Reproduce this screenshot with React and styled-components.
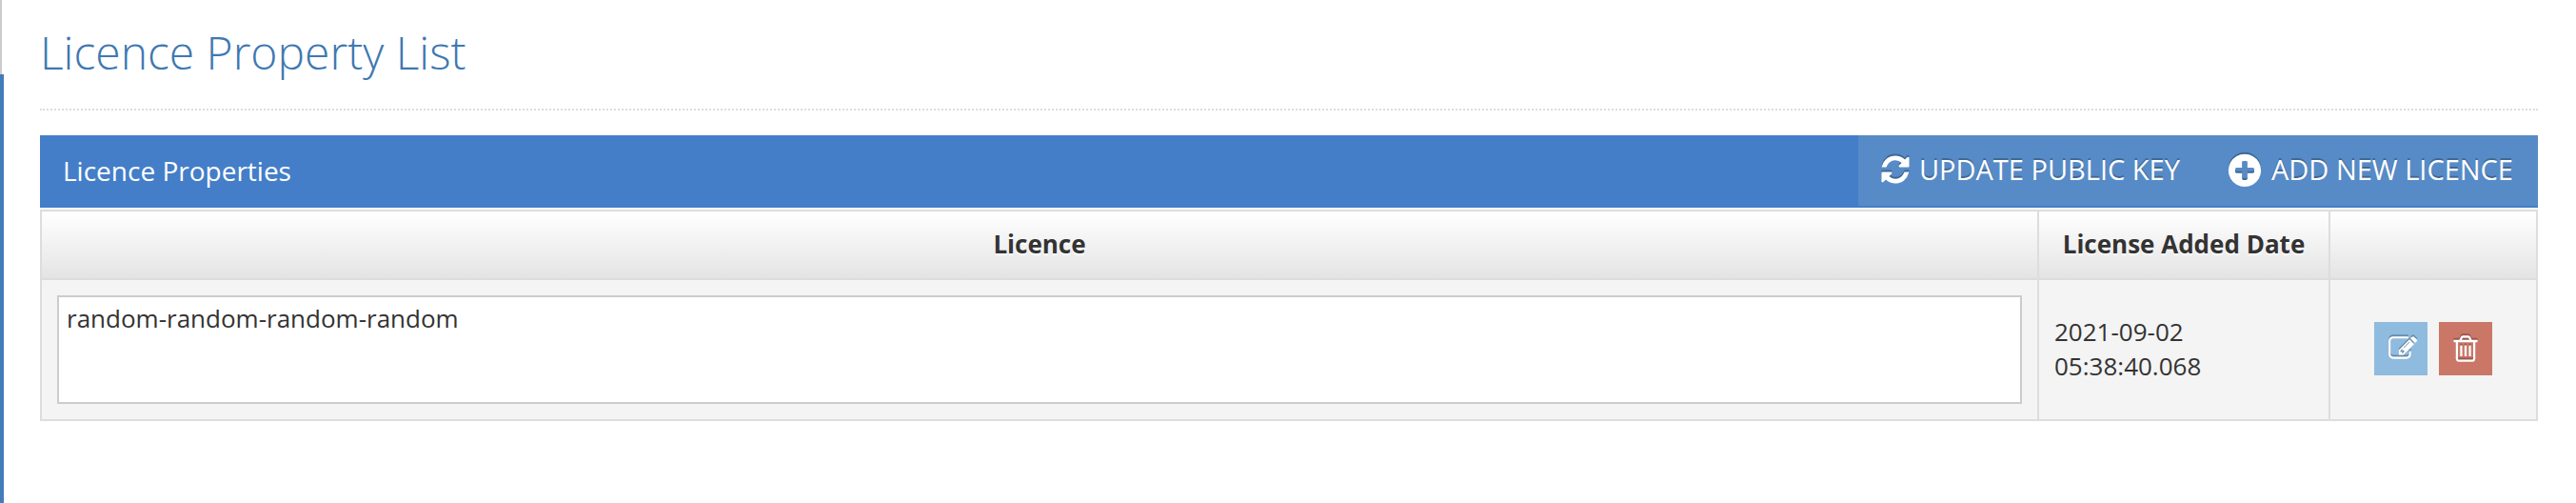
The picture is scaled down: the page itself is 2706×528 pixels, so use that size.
import React from "react";
import styled, { createGlobalStyle } from "styled-components";

const GlobalStyle = createGlobalStyle`
  *, *::before, *::after { box-sizing: border-box; }
  body {
    margin: 0;
    background: #fff;
    color: #333;
    font-family: "Open Sans", "Noto Sans", sans-serif;
    font-size: 26px;
    line-height: 36px;
  }
`;

const Page = styled.div`
  display: flex;
  min-height: 100vh;
`;

const Rail = styled.div`
  display: flex;
  flex-direction: column;
  flex: 0 0 4px;
`;

const RailTop = styled.div`
  width: 2px;
  height: 78px;
  background: #ccc;
`;

const RailActive = styled.div`
  flex: 1;
  background: #437cb8;
`;

const Main = styled.main`
  flex: 1;
  min-width: 0;
  padding: 22px 40px 24px 38px;
`;

const Title = styled.h1`
  margin: 0 0 26px;
  padding-bottom: 26px;
  border-bottom: 2px dotted #ddd;
  color: #3e78b2;
  font-size: 48px;
  font-weight: 300;
  line-height: 66px;
`;

const PanelHeader = styled.header`
  display: flex;
  justify-content: space-between;
  height: 76px;
  margin-bottom: 2px;
  padding-left: 24px;
  background: #447ec8;
  color: #fff;
`;

const PanelTitle = styled.h2`
  margin: 0;
  font-size: 28px;
  font-weight: 400;
  line-height: 74px;
`;

const Toolbar = styled.div`
  display: flex;
  height: 74px;
  background: #568bc7;
`;

const ToolButton = styled.button`
  display: flex;
  align-items: center;
  gap: 8px;
  padding: 0 26px 2px 22px;
  border: 0;
  background: transparent;
  color: #fff;
  font: inherit;
  font-size: 29px;
  text-shadow: 0 -2px 0 rgba(0, 0, 0, 0.25);
  text-transform: uppercase;
  white-space: nowrap;
  cursor: pointer;
`;

const Glyph = styled.svg`
  flex: none;
  width: ${(p) => p.$size}px;
  height: ${(p) => p.$size}px;
  fill: currentColor;
  filter: drop-shadow(0 -2px 0 rgba(0, 0, 0, 0.25));
`;

const Table = styled.table`
  width: 100%;
  border-collapse: collapse;
  table-layout: fixed;
`;

const HeadCell = styled.th`
  width: ${(p) => p.$width || "auto"};
  height: 72px;
  padding: 0 16px 2px;
  border: 2px solid #ddd;
  background: linear-gradient(#fff, #e4e4e4);
  font-weight: 700;
  text-align: center;
  text-shadow: 0 2px 0 #fff;
`;

const Cell = styled.td`
  padding: 16px;
  border: 2px solid #ddd;
  background: #f4f4f4;
  vertical-align: middle;
`;

const CompactCell = styled(Cell)`
  padding-bottom: 18px;
`;

const LicenceText = styled.textarea`
  display: block;
  width: 100%;
  height: 114px;
  padding: 4px 8px;
  border: 2px solid #ccc;
  border-radius: 0;
  outline: 0;
  background: #fff;
  color: #333;
  font: inherit;
  resize: none;
`;

const Actions = styled.div`
  display: flex;
  justify-content: center;
  gap: 12px;
`;

const IconButton = styled.button`
  display: flex;
  align-items: center;
  justify-content: center;
  width: 56px;
  height: 56px;
  padding: 0;
  border: 0;
  background: ${(p) => p.$color};
  color: #fff;
  cursor: pointer;
`;

const ICONS = {
  refresh: {
    viewBox: "0 0 1792 1792",
    d: "M1639 1056q0 5-1 7-64 268-268 434.500t-478 166.500q-146 0-282.500-55t-243.500-157l-129 129q-19 19-45 19t-45-19-19-45v-448q0-26 19-45t45-19h448q26 0 45 19t19 45-19 45l-137 137q71 66 161 102t187 36q134 0 250-65t186-179q11-17 53-117 8-23 30-23h192q13 0 22.500 9.500t9.500 22.500zm25-800v448q0 26-19 45t-45 19h-448q-26 0-45-19t-19-45 19-45l138-138q-148-137-349-137-134 0-250 65t-186 179q-11 17-53 117-8 23-30 23h-199q-13 0-22.500-9.500t-9.500-22.500v-7q65-268 270-434.500t480-166.500q146 0 284 55.500t245 156.500l130-129q19-19 45-19t45 19 19 45z",
  },
  plus: {
    viewBox: "0 -40 1792 1792",
    d: "M1344 960v-128q0-26-19-45t-45-19h-256v-256q0-26-19-45t-45-19h-128q-26 0-45 19t-19 45v256h-256q-26 0-45 19t-19 45v128q0 26 19 45t45 19h256v256q0 26 19 45t45 19h128q26 0 45-19t19-45v-256h256q26 0 45-19t19-45zm320-64q0 209-103 385.500t-279.500 279.500-385.500 103-385.500-103-279.500-279.500-103-385.500 103-385.500 279.500-279.500 385.500-103 385.500 103 279.500 279.500 103 385.500z",
  },
  edit: {
    viewBox: "-128 0 1792 1792",
    d: "M888 1184l116-116-152-152-116 116v56h96v96h56zm440-720q-16-16-33 1l-350 350q-17 17-1 33t33-1l350-350q17-17 1-33zm80 594v190q0 119-84.500 203.500t-203.500 84.500h-832q-119 0-203.500-84.500t-84.500-203.500v-832q0-119 84.500-203.500t203.500-84.500h832q63 0 117 25 15 7 18 23 3 17-9 29l-49 49q-14 14-32 8-23-6-45-6h-832q-66 0-113 47t-47 113v832q0 66 47 113t113 47h832q66 0 113-47t47-113v-126q0-13 9-22l64-64q15-15 35-7t20 29zm-96-738l288 288-672 672h-288v-288zm444 132l-92 92-288-288 92-92q28-28 68-28t68 28l152 152q28 28 28 68t-28 68z",
  },
  trash: {
    viewBox: "0 0 1792 1792",
    d: "M704 736v576q0 14-9 23t-23 9h-64q-14 0-23-9t-9-23v-576q0-14 9-23t23-9h64q14 0 23 9t9 23zm256 0v576q0 14-9 23t-23 9h-64q-14 0-23-9t-9-23v-576q0-14 9-23t23-9h64q14 0 23 9t9 23zm256 0v576q0 14-9 23t-23 9h-64q-14 0-23-9t-9-23v-576q0-14 9-23t23-9h64q14 0 23 9t9 23zm128 724v-948h-896v948q0 22 7 40.500t14.500 27 10.500 8.500h832q3 0 10.500-8.500t14.500-27 7-40.500zm-672-1076h448l-48-117q-7-9-17-11h-317q-10 2-17 11zm928 32v64q0 14-9 23t-23 9h-96v948q0 83-47 143.500t-113 60.500h-832q-66 0-113-58.500t-47-141.500v-952h-96q-14 0-23-9t-9-23v-64q0-14 9-23t23-9h309l70-167q15-37 54-63t79-26h320q40 0 79 26t54 63l70 167h309q14 0 23 9t9 23z",
  },
};

const Icon = ({ name, size }) => (
  <Glyph $size={size} viewBox={ICONS[name].viewBox} overflow="visible" aria-hidden="true">
    <path d={ICONS[name].d} />
  </Glyph>
);

const licences = [
  { key: "random-random-random-random", added: "2021-09-02 05:38:40.068" },
];

export default function App() {
  return (
    <>
      <GlobalStyle />
      <Page>
        <Rail>
          <RailTop />
          <RailActive />
        </Rail>
        <Main>
          <Title>Licence Property List</Title>
          <PanelHeader>
            <PanelTitle>Licence Properties</PanelTitle>
            <Toolbar>
              <ToolButton type="button">
                <Icon name="refresh" size={34} />
                Update Public Key
              </ToolButton>
              <ToolButton type="button">
                <Icon name="plus" size={40} />
                Add New Licence
              </ToolButton>
            </Toolbar>
          </PanelHeader>
          <Table>
            <thead>
              <tr>
                <HeadCell scope="col">Licence</HeadCell>
                <HeadCell scope="col" $width="306px">License Added Date</HeadCell>
                <HeadCell scope="col" $width="218px" aria-label="Actions" />
              </tr>
            </thead>
            <tbody>
              {licences.map((licence) => (
                <tr key={licence.key}>
                  <Cell>
                    <LicenceText
                      aria-label="Licence"
                      spellCheck={false}
                      defaultValue={licence.key}
                    />
                  </Cell>
                  <CompactCell>{licence.added}</CompactCell>
                  <CompactCell>
                    <Actions>
                      <IconButton type="button" $color="#8fbbdf" aria-label="Edit licence">
                        <Icon name="edit" size={30} />
                      </IconButton>
                      <IconButton type="button" $color="#cb7767" aria-label="Delete licence">
                        <Icon name="trash" size={32} />
                      </IconButton>
                    </Actions>
                  </CompactCell>
                </tr>
              ))}
            </tbody>
          </Table>
        </Main>
      </Page>
    </>
  );
}
